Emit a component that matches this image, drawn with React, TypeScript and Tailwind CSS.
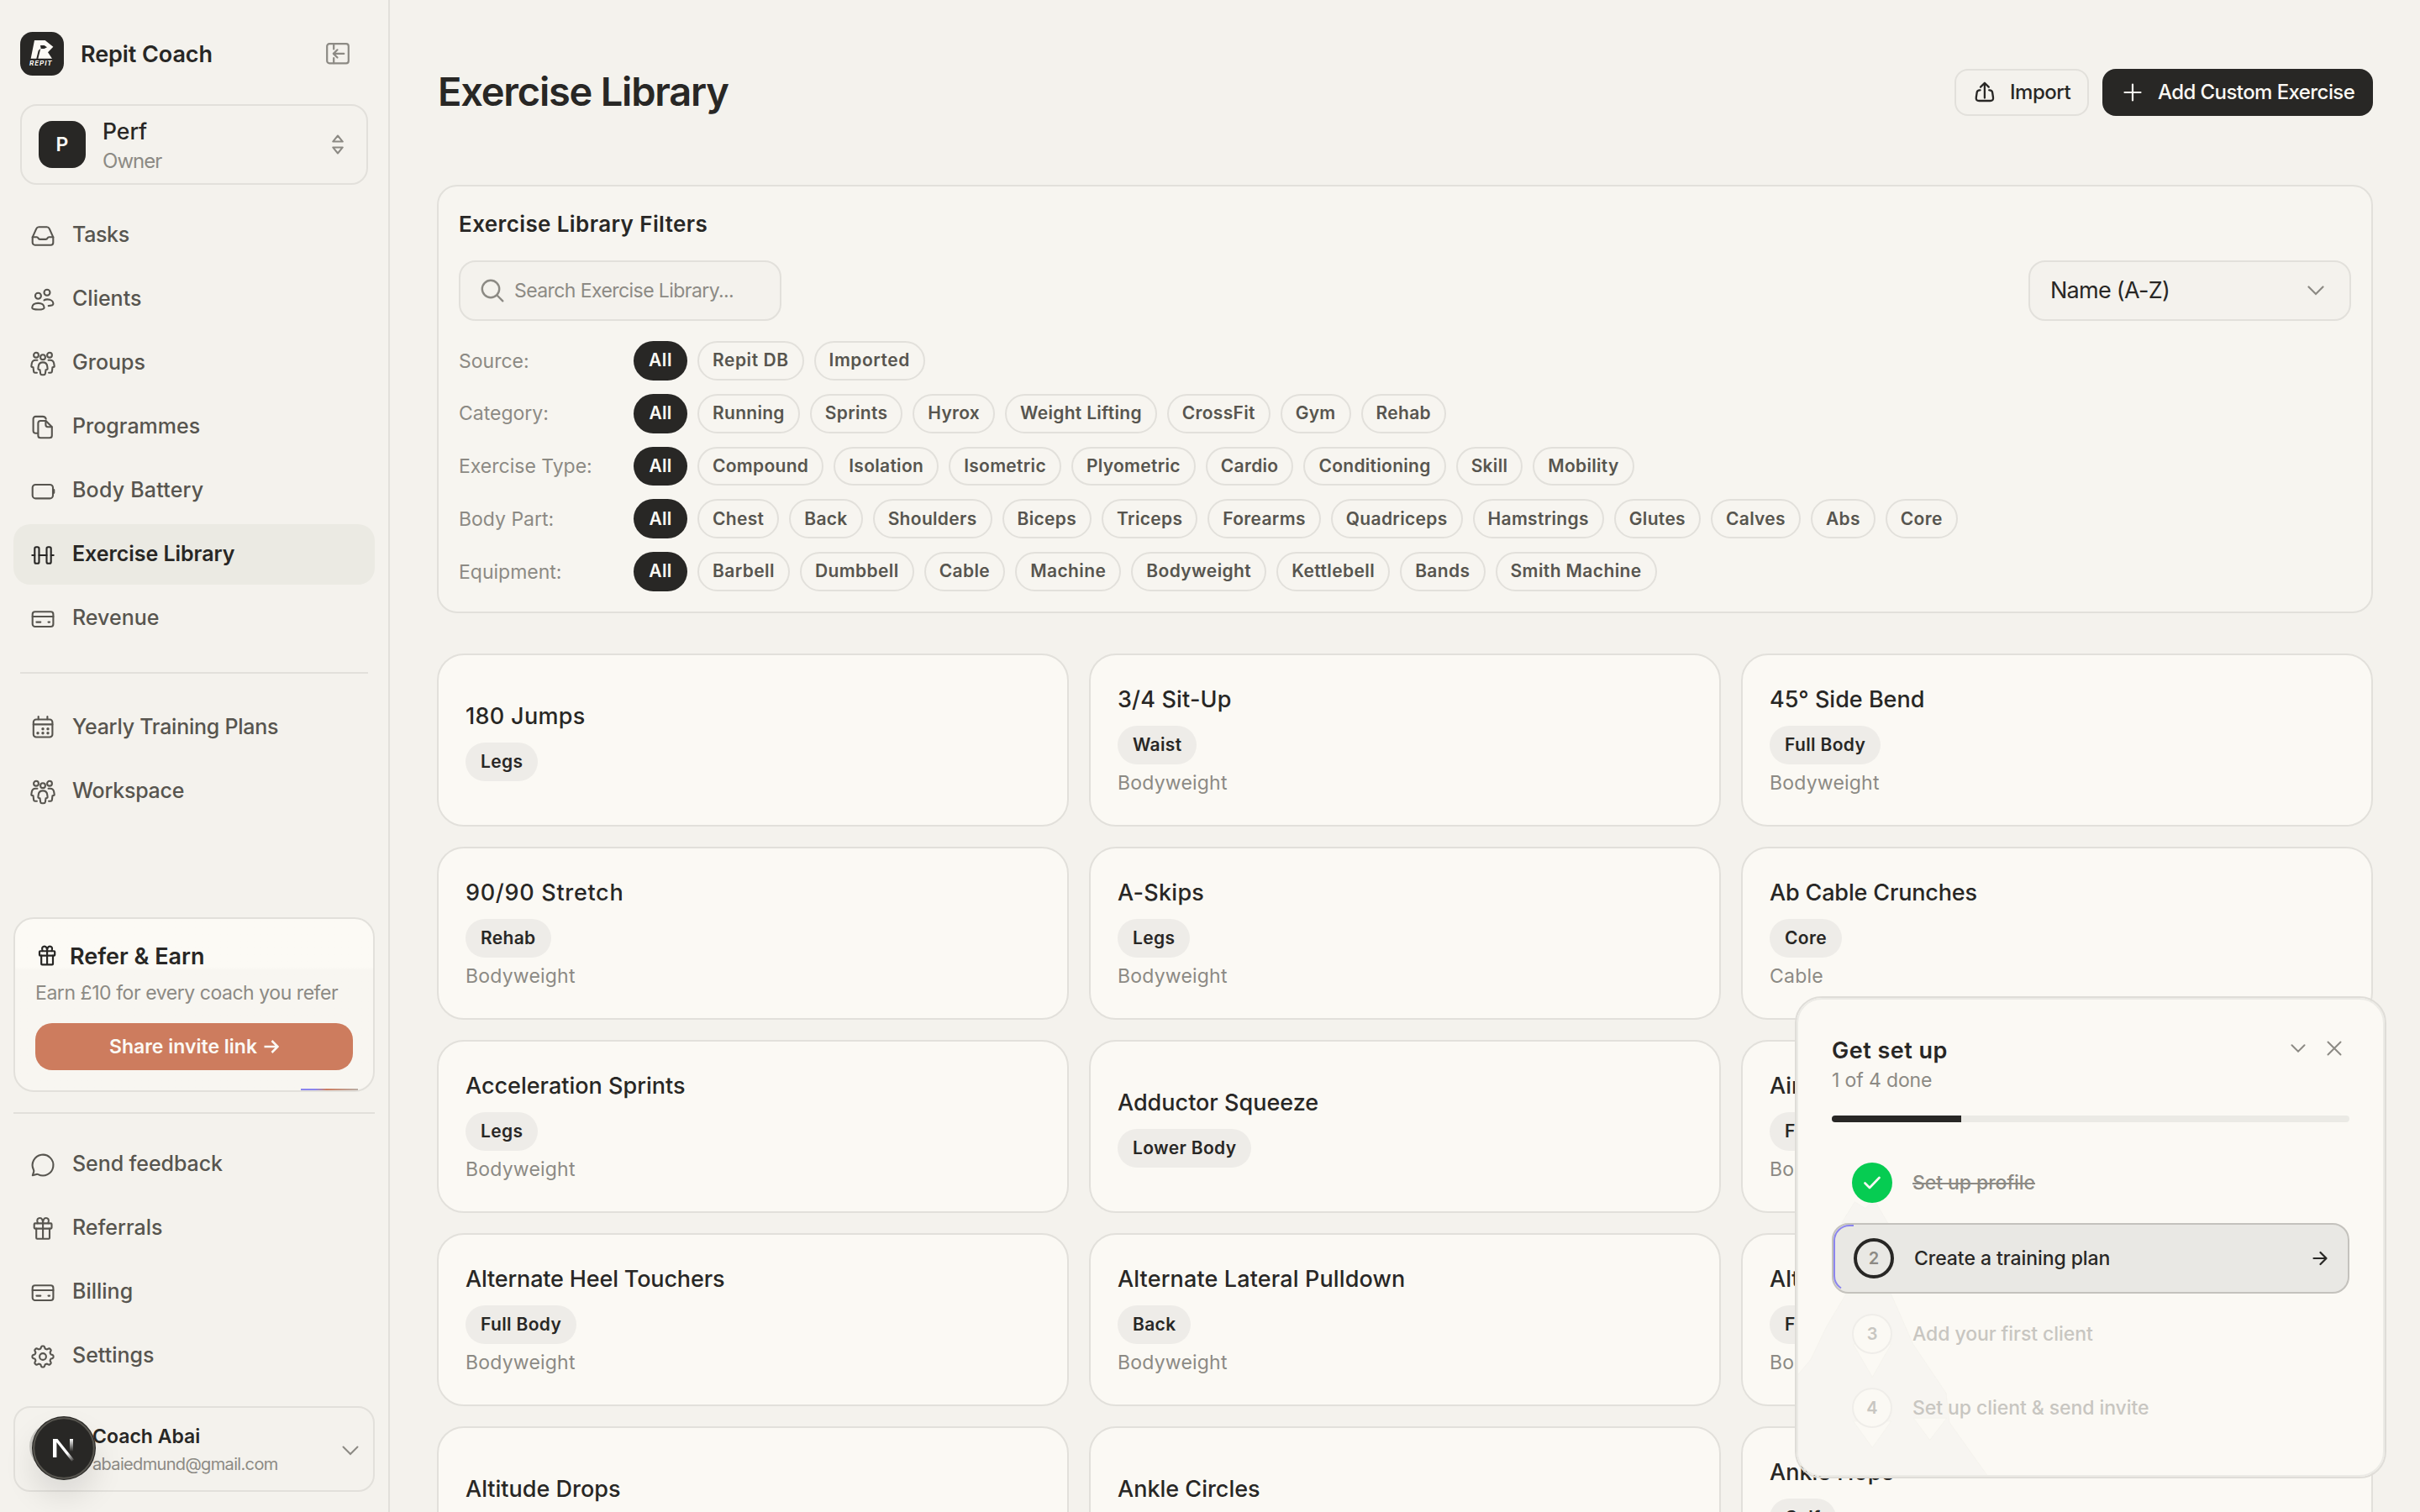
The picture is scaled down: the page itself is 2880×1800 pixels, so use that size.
import type { ReactNode } from 'react'
import clsx from 'clsx'

type IconProps = { className?: string; children?: ReactNode; size?: number; stroke?: number }

function Svg({ className, children, size = 32, stroke = 2.1 }: IconProps) {
  return (
    <svg
      viewBox={`0 0 ${size} ${size}`}
      width={size}
      height={size}
      fill="none"
      stroke="currentColor"
      strokeWidth={stroke}
      strokeLinecap="round"
      strokeLinejoin="round"
      className={clsx('shrink-0', className)}
    >
      {children}
    </svg>
  )
}

// Eight-lobed outline used by the settings icon
const gearPath =
  Array.from({ length: 96 }, (_, i) => {
    const a = (i / 96) * Math.PI * 2
    const r = 11.1 + 1.5 * Math.tanh(2 * Math.cos(8 * a))
    const x = 16 + r * Math.sin(a)
    const y = 16 - r * Math.cos(a)
    return `${i ? 'L' : 'M'}${x.toFixed(2)} ${y.toFixed(2)}`
  }).join('') + 'Z'

const icons = {
  tasks: (
    <>
      <path d="M3.7 17.4 8.2 7.4c.6-1.4 1.6-2.1 3.1-2.1h9.4c1.5 0 2.5.7 3.1 2.1l4.5 10v6.4a2.9 2.9 0 0 1-2.9 2.9H6.6a2.9 2.9 0 0 1-2.9-2.9Z" />
      <path d="M3.7 17.3h5c1 0 1.4.4 1.8 1.2.4.9 1 1.4 2 1.4h7c1 0 1.6-.5 2-1.4.4-.8.8-1.2 1.8-1.2h5" />
    </>
  ),
  clients: (
    <>
      <circle cx="10.4" cy="11.3" r="3.5" />
      <circle cx="21" cy="7.3" r="3.5" />
      <path d="M3.2 25.2c0-3.5 3.2-5.3 7.2-5.3s7.2 1.8 7.2 5.3c0 1.7-3 2.3-7.2 2.3s-7.2-.6-7.2-2.3Z" />
      <path d="M17.5 16.4c1.1-.7 2.4-1 3.8-1 4.1 0 7.1 2.1 7.1 5.2 0 1.7-2.3 2.5-5.7 2.5" />
    </>
  ),
  groups: (
    <>
      <circle cx="8" cy="5.7" r="2.9" />
      <circle cx="24" cy="5.7" r="2.9" />
      <circle cx="16" cy="8.2" r="2.9" />
      <path d="M16 14.4c-3.3 0-5 2-5.3 4.9l-.3 2.6c-.1.9.5 1.2 2.1 1.4l.6 4.3c.2 1.2.8 1.7 1.8 1.7h2.2c1 0 1.6-.5 1.8-1.7l.6-4.3c1.6-.2 2.2-.5 2.1-1.4l-.3-2.6c-.3-2.9-2-4.9-5.3-4.9Z" />
      <path d="M9.4 11.7H7.2c-2.6 0-4 1.6-4.4 4l-.5 3.1c-.1.9.4 1.2 2.2 1.4l.6 4.8c.1 1.2.7 1.7 1.7 1.7h2.1" />
      <path d="M22.6 11.7h2.2c2.6 0 4 1.6 4.4 4l.5 3.1c.1.9-.4 1.2-2.2 1.4l-.6 4.8c-.1 1.2-.7 1.7-1.7 1.7h-2.1" />
    </>
  ),
  programmes: (
    <>
      <path d="M9.3 22.8h-2a2.7 2.7 0 0 1-2.7-2.7V5.6a2.7 2.7 0 0 1 2.7-2.7h8.5c2.2 0 3.4.9 3.9 2.9" />
      <path d="M13.2 8h6.4l7.2 7.2v10.2a2.8 2.8 0 0 1-2.8 2.8H13.2a2.8 2.8 0 0 1-2.8-2.8V10.8A2.8 2.8 0 0 1 13.2 8Z" />
      <path d="M19.4 8.2v4.6c0 1.5.9 2.4 2.4 2.4h4.8" />
    </>
  ),
  battery: (
    <>
      <rect x="3.7" y="8" width="24.3" height="16.4" rx="3.6" />
      <path d="M28.4 13h.6c.8 0 1.3.6 1.3 1.4v3.2c0 .8-.5 1.4-1.3 1.4h-.6Z" fill="currentColor" stroke="none" />
    </>
  ),
  dumbbell: (
    <>
      <rect x="6.3" y="6.3" width="5.2" height="19.4" rx="1.8" />
      <rect x="20.5" y="6.3" width="5.2" height="19.4" rx="1.8" />
      <path d="M3.3 16h3M11.5 16h9M25.7 16h3" />
    </>
  ),
  card: (
    <>
      <rect x="3.7" y="7.2" width="24.7" height="17.8" rx="3" />
      <path d="M3.7 13h24.7M8.4 19.6h4.9M22.5 19.6h1.6" />
    </>
  ),
  calendar: (
    <>
      <rect x="4.8" y="5.5" width="22.6" height="21" rx="3.2" />
      <path d="M4.8 11.4h22.6M10.7 2v3.2M21.4 2v3.2" />
      <g fill="currentColor" stroke="none">
        <circle cx="16" cy="16.7" r="1.7" />
        <circle cx="22" cy="16.7" r="1.7" />
        <circle cx="10" cy="21.7" r="1.7" />
        <circle cx="16" cy="21.7" r="1.7" />
        <circle cx="22" cy="21.7" r="1.7" />
      </g>
    </>
  ),
  chat: <path d="M10.4 27.1A12.4 12.4 0 1 0 4.9 21.5c.4.8.5 1.6.3 2.4L3.8 28.3l4.6-1.4c.7-.2 1.3-.1 2 .2Z" />,
  gift: (
    <>
      <rect x="5.7" y="9.4" width="20.8" height="6.2" rx="1" />
      <path d="M8.2 15.6v11.2c0 .6.4 1 1 1h13.8c.6 0 1-.4 1-1V15.6M16.1 9.4v18.2" />
      <path d="M16.1 9.4c0-4-1.1-6.4-3.7-6.4-2.4 0-3.4 1.8-3 4l.5 2.2M16.1 9.4c0-4 1.1-6.4 3.7-6.4 2.4 0 3.4 1.8 3 4l-.5 2.2" />
    </>
  ),
  gear: (
    <>
      <path d={gearPath} />
      <circle cx="16" cy="16" r="3.9" />
    </>
  ),
}

type NavEntry = { icon: keyof typeof icons; label: string; active?: boolean; tracking?: string }

const mainNav: NavEntry[] = [
  { icon: 'tasks', label: 'Tasks', tracking: 'tracking-[-0.014em]' },
  { icon: 'clients', label: 'Clients' },
  { icon: 'groups', label: 'Groups' },
  { icon: 'programmes', label: 'Programmes' },
  { icon: 'battery', label: 'Body Battery', tracking: 'tracking-[0.008em]' },
  { icon: 'dumbbell', label: 'Exercise Library', active: true, tracking: 'tracking-[-0.002em]' },
  { icon: 'card', label: 'Revenue' },
]

const planNav: NavEntry[] = [
  { icon: 'calendar', label: 'Yearly Training Plans', tracking: 'tracking-[-0.01em]' },
  { icon: 'groups', label: 'Workspace', tracking: 'tracking-[-0.01em]' },
]

const footerNav: NavEntry[] = [
  { icon: 'chat', label: 'Send feedback', tracking: 'tracking-[-0.003em]' },
  { icon: 'gift', label: 'Referrals' },
  { icon: 'card', label: 'Billing' },
  { icon: 'gear', label: 'Settings' },
]

function NavList({ items }: { items: NavEntry[] }) {
  return (
    <nav className="flex flex-col gap-1">
      {items.map(({ icon, label, active, tracking }) => (
        <a
          key={label}
          className={clsx(
            'flex h-[72px] items-center gap-[19px] rounded-[20px] pl-[19px] text-[25px]',
            active ? 'bg-[#ebeae3] font-semibold text-[#282725]' : 'font-medium text-[#57554f]',
            tracking,
          )}
        >
          <Svg className="mt-[2px]">{icons[icon]}</Svg>
          <span>{label}</span>
        </a>
      ))}
    </nav>
  )
}

function Logo() {
  return (
    <svg viewBox="0 0 156 156" className="size-[52px] shrink-0">
      <rect width="156" height="156" rx="44" fill="#282725" />
      <path d="M51 30h38l29 23-19 20 15 22H64l9-36-8 8-7 28H38Z" fill="#fbf9f4" />
      <path d="M72 48h14l10 7-10 5H74Z" fill="#282725" />
      <text
        x="33"
        y="121"
        fill="#fbf9f4"
        fontFamily="Inter, sans-serif"
        fontSize="24"
        fontWeight="700"
        fontStyle="italic"
        textLength="80"
      >
        REPIT
      </text>
    </svg>
  )
}

function ReferCard() {
  return (
    <section className="relative flex flex-col rounded-[24px] border-2 border-[#e2e0db] bg-[#faf8f4] bg-linear-to-b from-[#fcfaf5] from-28% to-[#f8f6f1] to-30% px-6 pt-[26px] pb-6">
      <div className="flex h-9 items-center gap-[13px]">
        <Svg className="size-7 text-[#282725]" stroke={2.5}>{icons.gift}</Svg>
        <h2 className="pt-[2px] text-[27px] font-semibold text-[#282725]">Refer &amp; Earn</h2>
      </div>
      <p className="mt-[10px] h-8 text-[23px] leading-8 tracking-[-0.0195em] whitespace-nowrap text-[#8c8a84]">
        Earn £10 for every coach you refer
      </p>
      <button className="mt-5 flex h-14 items-center justify-center gap-2 rounded-[20px] bg-[#cd7c5e] text-[23px] font-semibold text-[#fbf9f4]">
        Share invite link
        <svg viewBox="0 0 18 18" className="size-[18px]" fill="none" stroke="currentColor" strokeWidth="2.6">
          <path d="M.5 9h15.5M9.5 2l7 7-7 7" />
        </svg>
      </button>
      <div className="absolute right-[18px] bottom-0 h-[2px] w-[68px] bg-linear-to-r from-[#8b85ee] from-25% via-[#cd7c5e] via-45% to-[#b9aea6]" />
    </section>
  )
}

function UserCard() {
  return (
    <div className="relative mt-6 flex h-[102px] items-center rounded-[20px] border-2 border-[#e2e0db] pr-[17px] pl-[92px]">
      <div className="flex-1 pt-[3px]">
        <p className="h-[33px] text-[23px] leading-8 font-semibold text-[#282725]">Coach Abai</p>
        <p className="text-[20px] leading-8 tracking-[-0.033em] text-[#8c8a84]">abaiedmund@gmail.com</p>
      </div>
      <svg viewBox="0 0 20 12" className="mt-1 h-3 w-5" fill="none" stroke="#8c8a84" strokeWidth="2" strokeLinecap="round">
        <path d="m1.5 1.5 8.5 8.5 8.5-8.5" />
      </svg>
      <div className="absolute top-[18px] left-[17px] size-14 rounded-full bg-[#cbc9c4]" />
      {/* dev tools badge floating over the avatar */}
      <div className="absolute top-[10px] left-5 size-[76px] rounded-full bg-[#282725] shadow-[0_20px_36px_rgba(0,0,0,0.10)]">
        <svg viewBox="0 0 76 76" className="size-full">
          <defs>
            <linearGradient id="nDiag" x1="38" y1="38" x2="49" y2="53" gradientUnits="userSpaceOnUse">
              <stop offset=".4" stopColor="#fff" />
              <stop offset="1" stopColor="#fff" stopOpacity="0.1" />
            </linearGradient>
            <linearGradient id="nStem" x1="0" y1="27" x2="0" y2="42" gradientUnits="userSpaceOnUse">
              <stop stopColor="#fff" />
              <stop offset="1" stopColor="#fff" stopOpacity="0" />
            </linearGradient>
          </defs>
          <circle cx="38" cy="38" r="35.8" fill="none" stroke="#57554f" strokeWidth="2" />
          <path d="M25 27h5.4L50 51.5l-2.6 2.3L29.4 31v18H25Z" fill="url(#nDiag)" />
          <rect x="45" y="27" width="4" height="15" fill="url(#nStem)" />
        </svg>
      </div>
    </div>
  )
}

function Sidebar() {
  return (
    <aside className="flex h-full w-[464px] shrink-0 flex-col border-r-2 border-[#e2e0db] px-4 pb-6">
      <header className="mt-[38px] flex h-[52px] items-center pr-[30px] pl-2">
        <Logo />
        <h1 className="ml-5 flex-1 pt-[2px] text-[27px] font-semibold tracking-[-0.003em] text-[#282725]">Repit Coach</h1>
        <svg viewBox="0 0 28 26" className="h-[26px] w-7" fill="none" stroke="#8c8a84" strokeWidth="2.2" strokeLinecap="round" strokeLinejoin="round">
          <rect x="1.2" y="1.2" width="25.6" height="23.2" rx="2.8" />
          <path d="M9.2 1.5v6M9.2 18.2v6M9 12.9h12.3M13.5 8.3 8.8 12.9l4.7 4.6" />
        </svg>
      </header>

      <div className="mx-2 mt-[34px] flex h-24 items-center rounded-[20px] border-2 border-[#e2e0db] pr-[27px] pl-5">
        <div className="flex size-14 items-center justify-center rounded-[16px] bg-[#282725] text-[23px] font-semibold text-[#fbf9f4]">
          P
        </div>
        <div className="ml-5 flex-1 pt-[2px]">
          <p className="h-9 text-[26.5px] leading-9 font-medium text-[#282725]">Perf</p>
          <p className="text-[24px] leading-[35px] tracking-[-0.04em] text-[#8c8a84]">Owner</p>
        </div>
        <svg viewBox="0 0 14 24" className="h-6 w-[14px]" fill="none" stroke="#8c8a84" strokeWidth="2" strokeLinejoin="round">
          <path d="M7 1.5 12.8 8.6H1.2ZM7 22.5l5.8-7.1H1.2Z" />
        </svg>
      </div>

      <div className="mt-6">
        <NavList items={mainNav} />
      </div>
      <hr className="mx-2 mt-7 mb-7 border-t-2 border-[#e2e0db]" />
      <NavList items={planNav} />

      <div className="mt-auto">
        <ReferCard />
        <hr className="my-6 border-t-2 border-[#e2e0db]" />
        <NavList items={footerNav} />
        <UserCard />
      </div>
    </aside>
  )
}

const filters = [
  { label: 'Source:', tracking: 'tracking-[0.026em]', options: ['Repit DB', 'Imported'] },
  {
    label: 'Category:',
    tracking: 'tracking-[0.014em]',
    options: ['Running', 'Sprints', 'Hyrox', 'Weight Lifting', 'CrossFit', 'Gym', 'Rehab'],
  },
  {
    label: 'Exercise Type:',
    tracking: 'tracking-[0.014em]',
    options: ['Compound', 'Isolation', 'Isometric', 'Plyometric', 'Cardio', 'Conditioning', 'Skill', 'Mobility'],
  },
  {
    label: 'Body Part:',
    tracking: 'tracking-[0.015em]',
    options: ['Chest', 'Back', 'Shoulders', 'Biceps', 'Triceps', 'Forearms', 'Quadriceps', 'Hamstrings', 'Glutes', 'Calves', 'Abs', 'Core'],
  },
  {
    label: 'Equipment:',
    tracking: 'tracking-[0.019em]',
    options: ['Barbell', 'Dumbbell', 'Cable', 'Machine', 'Bodyweight', 'Kettlebell', 'Bands', 'Smith Machine'],
  },
]

function FilterPanel() {
  return (
    <section className="mt-[82px] flex flex-col rounded-[24px] border-2 border-[#e2e0db] bg-[#f7f5f0] p-6">
      <h2 className="h-10 pt-px text-[26px] leading-10 font-semibold tracking-[0.015em] text-[#282725]">Exercise Library Filters</h2>
      <div className="mt-6 flex justify-between">
        <div className="flex h-[72px] w-96 items-center gap-3 rounded-[20px] border-2 border-[#e2e0db] bg-[#f4f2ed] px-6">
          <Svg size={28} stroke={2.4} className="text-[#8c8a84]">
            <circle cx="12" cy="12" r="10.2" />
            <path d="m19.5 19.5 6.8 6.8" />
          </Svg>
          <span className="text-[23px] tracking-[-0.025em] text-[#8c8a84]">Search Exercise Library...</span>
        </div>
        <div className="flex h-[72px] w-96 items-center justify-between rounded-[20px] border-2 border-[#e2e0db] bg-[#f4f2ed] pr-[30px] pl-6">
          <span className="pt-px text-[27px] tracking-[-0.027em] text-[#282725]">Name (A-Z)</span>
          <svg viewBox="0 0 20 12" className="h-3 w-5" fill="none" stroke="#8c8a84" strokeWidth="2.2" strokeLinecap="round">
            <path d="m1.5 1.5 8.5 8.5 8.5-8.5" />
          </svg>
        </div>
      </div>
      <div className="mt-6 flex flex-col gap-4">
        {filters.map(({ label, tracking, options }) => (
          <div key={label} className="flex h-[46.8px] items-center">
            <span className="w-52 pt-px text-[23px] text-[#8c8a84]">{label}</span>
            <div className={clsx('flex h-full gap-3 text-[21px] font-semibold', tracking)}>
              <span className="flex h-full w-16 items-center justify-center rounded-full bg-[#282725] pb-px text-[#fbf9f4]">All</span>
              {options.map((option) => (
                <span
                  key={option}
                  className="flex h-full items-center rounded-full border-2 border-[#e2e0db] px-4 pb-px text-[#57554f]"
                >
                  {option}
                </span>
              ))}
            </div>
          </div>
        ))}
      </div>
    </section>
  )
}

type Exercise = { name: string; tag: string; equipment?: string; tracking?: string }

const exercises: Exercise[] = [
  { name: '180 Jumps', tag: 'Legs', tracking: 'tracking-[0.012em]' },
  { name: '3/4 Sit-Up', tag: 'Waist', equipment: 'Bodyweight', tracking: 'tracking-[0.006em]' },
  { name: '45° Side Bend', tag: 'Full Body', equipment: 'Bodyweight' },
  { name: '90/90 Stretch', tag: 'Rehab', equipment: 'Bodyweight', tracking: 'tracking-[0.026em]' },
  { name: 'A-Skips', tag: 'Legs', equipment: 'Bodyweight', tracking: 'tracking-[0.01em]' },
  { name: 'Ab Cable Crunches', tag: 'Core', equipment: 'Cable', tracking: 'tracking-[-0.006em]' },
  { name: 'Acceleration Sprints', tag: 'Legs', equipment: 'Bodyweight' },
  { name: 'Adductor Squeeze', tag: 'Lower Body' },
  { name: 'Air Squat', tag: 'Full Body', equipment: 'Bodyweight' },
  { name: 'Alternate Heel Touchers', tag: 'Full Body', equipment: 'Bodyweight', tracking: 'tracking-[-0.006em]' },
  { name: 'Alternate Lateral Pulldown', tag: 'Back', equipment: 'Bodyweight', tracking: 'tracking-[0.005em]' },
  { name: 'Alternating Lunge', tag: 'Full Body', equipment: 'Bodyweight' },
  { name: 'Altitude Drops', tag: 'Legs' },
  { name: 'Ankle Circles', tag: 'Calf' },
  { name: 'Ankle Hops', tag: 'Calf', equipment: 'Bodyweight' },
]

function ExerciseCard({ name, tag, equipment, tracking }: Exercise) {
  return (
    <article className="flex h-[206px] flex-col items-start justify-center rounded-[32px] border-2 border-[#e2e0db] bg-[#fbf9f4] px-8">
      <h3 className={clsx('h-10 pt-px text-[27px] leading-10 font-medium text-[#282725]', tracking)}>{name}</h3>
      <span className="mt-3 flex h-[46px] items-center rounded-full bg-[#eeece8] px-[18px] text-[21px] font-semibold tracking-[0.016em] text-[#282725]">
        {tag}
      </span>
      {equipment && <p className="mt-1 text-[23px] leading-9 tracking-[0.009em] text-[#8c8a84]">{equipment}</p>}
    </article>
  )
}

const steps = [
  { label: 'Set up profile', done: true },
  { label: 'Create a training plan', current: true },
  { label: 'Add your first client' },
  { label: 'Set up client & send invite' },
]

function SetupPopup() {
  return (
    <div className="absolute top-[1186px] left-[2136px] h-[574px] w-[704px] overflow-hidden rounded-[32px] border-2 border-[#dfddd8]">
      <div className="relative flex h-full flex-col overflow-hidden rounded-[30px] border-2 border-[#ecebe6] bg-[#fbf9f4] px-10 pt-10">
        {/* faint mountain behind the steps */}
        <svg viewBox="0 0 1260 1140" className="absolute top-[190px] -left-[20px] h-[380px] w-[420px]" fill="#f7f5f1" stroke="#f3f1ec" strokeWidth="2">
          <path d="M262 152 215 228H380L340 160 318 158 300 176Z" />
          <path d="M230 482 160 600 105 715 50 780V1150H750L600 940 588 835 470 660 392 482Z" />
          <path d="M256 660 325 778 392 660ZM256 935l69 95 67-95ZM472 925l58 78 60-78Z" fill="#fbf9f4" />
        </svg>
        <div className="relative flex justify-between">
          <div>
            <h2 className="h-10 pt-px text-[27px] leading-10 font-semibold tracking-[0.018em] text-[#282725]">Get set up</h2>
            <p className="h-8 text-[23px] leading-8 tracking-[-0.006em] text-[#8c8a84]">1 of 4 done</p>
          </div>
          <div className="flex h-9 items-center gap-[25px] pr-[9px] text-[#8c8a84]">
            <svg viewBox="0 0 18 10" className="h-[10px] w-[18px]" fill="none" stroke="currentColor" strokeWidth="2" strokeLinecap="round">
              <path d="m1.5 1.2 7.5 7.5 7.5-7.5" />
            </svg>
            <svg viewBox="0 0 18 18" className="size-[18px]" fill="none" stroke="currentColor" strokeWidth="2" strokeLinecap="round">
              <path d="m1.5 1.5 15 15m0-15-15 15" />
            </svg>
          </div>
        </div>
        <div className="relative mt-[26px] h-2 overflow-hidden rounded-full bg-[#ebeae5]">
          <div className="h-full w-1/4 bg-[#282725]" />
        </div>
        <ol className="relative mt-8 flex flex-col gap-2 text-[23px] font-medium tracking-[-0.003em]">
          {steps.map(({ label, done, current }, i) => (
            <li
              key={label}
              className={clsx(
                'relative flex items-center gap-6 px-6',
                current ? 'h-[84px] rounded-[20px] border-2 border-[#c4c2bd] bg-[#e9e8e4] text-[#282725]' : 'h-20',
                done && 'text-[#8c8a84] line-through',
                !done && !current && 'text-[#c8c6c1]',
              )}
            >
              {done ? (
                <span className="flex size-12 items-center justify-center rounded-full bg-[#06cc52]">
                  <svg viewBox="0 0 20 16" className="h-4 w-5" fill="none" stroke="#fbf9f4" strokeWidth="2.6" strokeLinecap="round" strokeLinejoin="round">
                    <path d="m1.5 8.5 5.5 5.5L18.5 2" />
                  </svg>
                </span>
              ) : (
                <span
                  className={clsx(
                    'flex size-12 items-center justify-center rounded-full text-[20px] font-semibold',
                    current ? 'border-4 border-[#282725] text-[#8c8a84]' : 'border-2 border-[#efede9] bg-[#fbf9f4]',
                  )}
                >
                  {i + 1}
                </span>
              )}
              <span className="flex-1">{label}</span>
              {current && (
                <>
                  <svg viewBox="0 0 18 18" className="size-[18px]" fill="none" stroke="currentColor" strokeWidth="2.2" strokeLinecap="round" strokeLinejoin="round">
                    <path d="M1.5 9h15M9.5 2l7 7-7 7" />
                  </svg>
                  <svg viewBox="0 0 26 80" className="absolute top-0 left-0 h-20 w-[26px]" fill="none" stroke="#8b85ee" strokeWidth="2">
                    <path d="M24 1h-5A18 18 0 0 0 1 19v42c0 6 3 11 8 14.5" />
                  </svg>
                </>
              )}
            </li>
          ))}
        </ol>
      </div>
    </div>
  )
}

export default function App() {
  return (
    <div className="relative flex h-[1800px] w-[2880px] overflow-hidden bg-[#f4f2ed] font-['Inter','Liberation_Sans',sans-serif] antialiased">
      <Sidebar />
      <main className="flex flex-1 flex-col px-14">
        <header className="mt-[82px] flex h-14 items-center justify-between">
          <h1 className="pb-[2px] pl-px text-[47px] font-semibold tracking-[-0.026em] text-[#282725]">Exercise Library</h1>
          <div className="flex gap-4">
            <button className="flex h-14 w-40 items-center gap-4 rounded-[16px] border-2 border-[#e2e0db] pl-5 text-[24px] font-medium tracking-[-0.02em] text-[#282725]">
              <Svg size={28} stroke={2.3}>
                <path d="M13.9 20.5V3.2M9 7.6l4.9-4.8 4.9 4.8" />
                <path d="M8.6 11.3H7.9c-1.9 0-2.9.9-3.2 2.7l-.9 6c-.4 2.8.8 4 3.4 4h13.4c2.6 0 3.8-1.2 3.4-4l-.9-6c-.3-1.8-1.3-2.7-3.2-2.7h-.7" />
              </Svg>
              Import
            </button>
            <button className="flex h-14 w-[322px] items-center gap-4 rounded-[16px] bg-[#282725] pl-[22px] text-[24px] font-medium tracking-[-0.024em] whitespace-nowrap text-[#fbf9f4]">
              <Svg size={28} stroke={2.2}>
                <path d="M14 4.5v19M4.5 14h19" />
              </Svg>
              Add Custom Exercise
            </button>
          </div>
        </header>

        <FilterPanel />

        <div className="mt-12 grid grid-cols-3 gap-6">
          {exercises.map((exercise) => (
            <ExerciseCard key={exercise.name} {...exercise} />
          ))}
        </div>
      </main>
      <SetupPopup />
    </div>
  )
}
